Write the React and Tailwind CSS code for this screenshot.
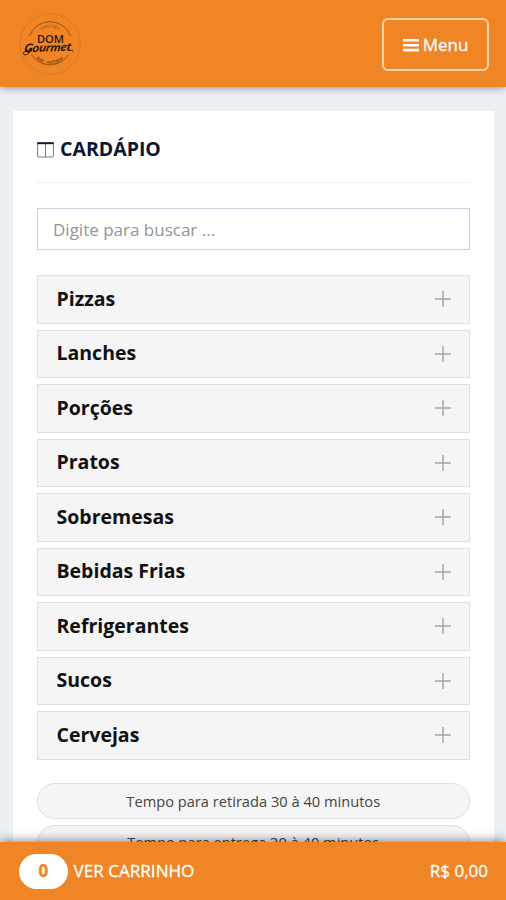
import { useState } from 'react';

const categories = [
  'Pizzas',
  'Lanches',
  'Porções',
  'Pratos',
  'Sobremesas',
  'Bebidas Frias',
  'Refrigerantes',
  'Sucos',
  'Cervejas',
];

const notices = [
  'Tempo para retirada 30 à 40 minutos',
  'Tempo para entrega 30 à 40 minutos',
];

const Logo = () => (
  <svg viewBox="0 0 64 64" className="h-16 w-16" role="img">
    <defs>
      <path id="logo-top" d="M15.5 32 A16.5 16.5 0 0 1 48.5 32" />
      <path id="logo-bottom" d="M12 32 A20 20 0 0 0 52 32" />
    </defs>
    <circle cx="32" cy="32" r="30.3" fill="none" stroke="#dd7a20" strokeWidth="1" />
    {/* Inner ring, broken where the name crosses it */}
    <path
      d="M11.5 24 A21.8 21.8 0 0 1 52.5 24 M13.5 42.5 A21.8 21.8 0 0 0 50.5 42.5"
      fill="none"
      stroke="#7d4412"
      strokeWidth="0.8"
    />
    <text fontSize="4.2" fill="#7d4412" textAnchor="middle" fontFamily="Open Sans, sans-serif">
      <textPath href="#logo-top" startOffset="50%">LANCHES</textPath>
    </text>
    <text fontSize="4.2" fontWeight="600" fill="#6b380e" textAnchor="middle" fontFamily="Open Sans, sans-serif">
      <textPath href="#logo-bottom" startOffset="50%">BAR - PIZZARIA</textPath>
    </text>
    <text
      x="32.5"
      y="31"
      fontSize="10"
      fontWeight="600"
      fill="#2b1604"
      textAnchor="middle"
      textLength="27"
      lengthAdjust="spacingAndGlyphs"
      fontFamily="Open Sans, sans-serif"
    >
      DOM
    </text>
    <text
      x="29.5"
      y="39.5"
      fontSize="11.5"
      fontWeight="700"
      fontStyle="italic"
      fill="#1c0e02"
      textAnchor="middle"
      textLength="47"
      lengthAdjust="spacingAndGlyphs"
      fontFamily="Lato, sans-serif"
      transform="rotate(-2 30 38) skewX(-12) translate(8 0)"
    >
      Gourmet
    </text>
    <path d="M13 38 C10 44 5 43.5 5.5 41 C6 39 10 38 14 37.5 M51 38.5 C53 38.5 54 37.5 55 39.5" fill="none" stroke="#1c0e02" strokeWidth="1" />
  </svg>
);

const PlusIcon = () => (
  <svg viewBox="0 0 16 16" className="h-4 w-4" fill="none" stroke="#a6a6a6" strokeWidth="1.4">
    <path d="M8 0v16M0 8h16" />
  </svg>
);

const App = () => {
  const [search, setSearch] = useState('');
  const [open, setOpen] = useState(null);

  return (
    <div className="flex h-[900px] flex-col overflow-hidden bg-[#ecf0f4] font-['Open_Sans',sans-serif]">
      {/* Header */}
      <header className="z-10 flex h-[87px] shrink-0 items-center justify-between bg-[#f08526] pr-[17px] pl-[18px] shadow-[0_1px_8px_rgba(0,0,0,0.4)]">
        <Logo />
        <button className="mt-0.5 flex h-[53px] w-[107px] items-center justify-center gap-1 rounded-md border-2 border-[#fdd3a8] text-[17px] text-white [-webkit-text-stroke:0.3px_white]">
          <svg viewBox="0 0 16 14" className="h-3.5 w-4" fill="currentColor">
            <path d="M0 1h16v2.6H0zM0 5.9h16v2.6H0zM0 10.8h16v2.6H0z" />
          </svg>
          Menu
        </button>
      </header>

      {/* Menu card */}
      <main className="mr-3 ml-[12.5px] mt-6 min-h-0 flex-1 overflow-hidden bg-white px-[24.5px] pt-[23px]">
        <div className="flex h-[49px] items-start gap-[6px] border-b border-[#eeeff3]">
          <svg viewBox="0 0 17 16" className="mt-[8px] h-4 w-[17px]" fill="none">
            <rect x=".6" y="1" width="15.8" height="14" rx="1" stroke="#777b86" />
            <path d="M8.5 2v13" stroke="#777b86" />
            <path d="M.2 1.2h16.6" stroke="#111c3d" strokeWidth="2" />
          </svg>
          <h1 className="text-[19.5px] leading-[30px] font-bold text-[#0b1533]">CARDÁPIO</h1>
        </div>

        <input
          value={search}
          onChange={(e) => setSearch(e.target.value)}
          placeholder="Digite para buscar ..."
          className="mt-[25px] block h-[42px] w-full border border-[#cdcede] px-[15px] text-[17px] placeholder:text-[#949494]"
        />

        <div className="mt-[25px] flex flex-col gap-[6px]">
          {categories.map((name) => (
            <button
              key={name}
              onClick={() => setOpen(open === name ? null : name)}
              className="flex h-[48.5px] items-center justify-between border border-[#dfdfdf] bg-[#f5f5f5] pr-[18px] pl-[18.5px] text-[19.5px] font-bold text-[#111]"
            >
              <span className="pb-[1.5px]">{name}</span>
              <PlusIcon />
            </button>
          ))}
        </div>

        <div className="mt-[23.5px] flex flex-col gap-[5.5px]">
          {notices.map((text) => (
            <div
              key={text}
              className="flex h-[36px] items-center justify-center rounded-full border border-[#dedede] bg-[#f5f5f5] pt-px text-[14.65px] text-[#444]"
            >
              {text}
            </div>
          ))}
        </div>
      </main>

      {/* Cart bar */}
      <footer className="z-10 flex h-[58px] shrink-0 items-center bg-[#f08526] pr-[18px] pl-[18.5px] text-[17px] text-white shadow-[0_-1px_10px_rgba(0,0,0,0.5)] [-webkit-text-stroke:0.3px]">
        <span className="flex h-[35px] w-[49.5px] items-center justify-center rounded-full bg-white font-bold text-[#f08526]">
          0
        </span>
        <span className="ml-[5.5px] text-[17.1px]">VER CARRINHO</span>
        <span className="ml-auto">R$ 0,00</span>
      </footer>
    </div>
  );
};

export default App;
